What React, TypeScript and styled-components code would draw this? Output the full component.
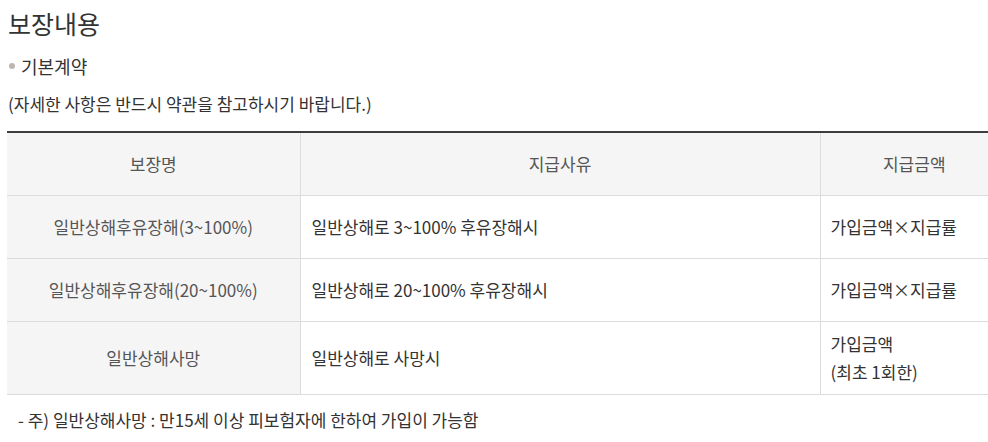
import React from "react";
import styled, { createGlobalStyle } from "styled-components";

const GlobalStyle = createGlobalStyle`
  html, body {
    margin: 0;
    padding: 0;
    overflow: hidden;
    background: #fff;
  }
  body {
    font-family: "Noto Sans CJK KR", "Noto Sans", sans-serif;
    color: #333;
  }
`;

const Page = styled.div`
  padding: 6px 0 0 7px;
  width: 1010px;
`;

const Title = styled.h2`
  margin: 0;
  font-size: 25px;
  line-height: 34px;
  font-weight: 400;
  color: #333;
  padding-left: 1px;
`;

const SubTitle = styled.h3`
  margin: 13px 0 0;
  display: flex;
  align-items: center;
  font-size: 18px;
  line-height: 26px;
  font-weight: 400;
  color: #333;
  padding-left: 2px;

  &::before {
    content: "";
    width: 6px;
    height: 6px;
    border-radius: 50%;
    background: #bdb5ae;
    margin-right: 6px;
  }
`;

const Note = styled.p`
  margin: 13px 0 0;
  font-size: 17px;
  line-height: 24px;
  color: #333;
  padding-left: 1px;
`;

const Table = styled.table`
  margin-top: 15px;
  width: 1001px;
  table-layout: fixed;
  border-collapse: collapse;
  border-top: 2px solid #3d3d3d;
  font-size: 17px;
`;

const HeadCell = styled.th`
  height: 62px;
  padding: 0 10px;
  background: #f5f5f5;
  border-bottom: 1px solid #dcdcdc;
  border-left: 1px solid #dcdcdc;
  font-weight: 400;
  color: #555;
  text-align: center;
  line-height: 28px;
  &:first-child {
    border-left: none;
  }
`;

const Row = styled.tr<{ $tall?: boolean }>`
  height: ${(p) => (p.$tall ? "72px" : "63px")};
`;

const NameCell = styled.td`
  padding: 8px 10px;
  background: #f5f5f5;
  border-bottom: 1px solid #dcdcdc;
  color: #555;
  text-align: center;
  line-height: 28px;
`;

const Cell = styled.td<{ $pad?: number }>`
  padding: 8px ${(p) => p.$pad ?? 11}px;
  border-bottom: 1px solid #dcdcdc;
  border-left: 1px solid #dcdcdc;
  color: #333;
  text-align: left;
  line-height: 28px;
`;

const Footnote = styled.p`
  margin: 13px 0 0;
  padding-left: 11px;
  font-size: 17px;
  line-height: 24px;
  color: #333;
`;

const rows = [
  {
    name: "일반상해후유장해(3~100%)",
    reason: "일반상해로 3~100% 후유장해시",
    amount: ["가입금액×지급률"],
  },
  {
    name: "일반상해후유장해(20~100%)",
    reason: "일반상해로 20~100% 후유장해시",
    amount: ["가입금액×지급률"],
  },
  {
    name: "일반상해사망",
    reason: "일반상해로 사망시",
    amount: ["가입금액", "(최초 1회한)"],
  },
];

export default function App() {
  return (
    <>
      <GlobalStyle />
      <Page>
        <Title>보장내용</Title>
        <SubTitle>기본계약</SubTitle>
        <Note>(자세한 사항은 반드시 약관을 참고하시기 바랍니다.)</Note>
        <Table>
          <colgroup>
            <col style={{ width: 293 }} />
            <col style={{ width: 520 }} />
            <col style={{ width: 188 }} />
          </colgroup>
          <thead>
            <tr>
              <HeadCell>보장명</HeadCell>
              <HeadCell>지급사유</HeadCell>
              <HeadCell>지급금액</HeadCell>
            </tr>
          </thead>
          <tbody>
            {rows.map((r) => (
              <Row key={r.name} $tall={r.amount.length > 1}>
                <NameCell>{r.name}</NameCell>
                <Cell>{r.reason}</Cell>
                <Cell $pad={10}>
                  {r.amount.map((a, i) => (
                    <React.Fragment key={a}>
                      {i > 0 && <br />}
                      {a}
                    </React.Fragment>
                  ))}
                </Cell>
              </Row>
            ))}
          </tbody>
        </Table>
        <Footnote>- 주) 일반상해사망 : 만15세 이상 피보험자에 한하여 가입이 가능함</Footnote>
      </Page>
    </>
  );
}
